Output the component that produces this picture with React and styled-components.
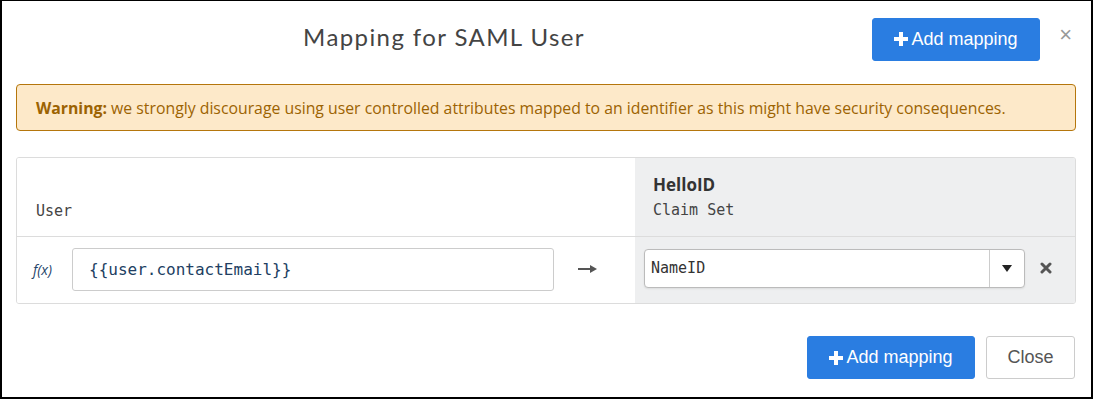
import React from "react";
import styled, { createGlobalStyle } from "styled-components";

const GlobalStyle = createGlobalStyle`
  html, body { margin: 0; padding: 0; background: #fff; }
  * { box-sizing: border-box; }
`;

const Frame = styled.div`
  width: 1093px;
  height: 399px;
  border: 2px solid #000;
  border-top-width: 1px;
  padding: 16px 15px 0 14px;
  background: #fff;
  display: flex;
  flex-direction: column;
`;

const Header = styled.div`
  display: flex;
  align-items: center;
  height: 44px;
`;

const Title = styled.h4`
  flex: 1;
  margin: -5px 0 0 0;
  text-align: center;
  font-family: "Lato", "Open Sans", sans-serif;
  font-weight: 400;
  font-size: 24px;
  letter-spacing: 1.4px;
  color: #444;
`;

const PrimaryButton = styled.button`
  display: inline-flex;
  align-items: center;
  justify-content: center;
  gap: 3px;
  width: 168px;
  height: 43px;
  border: 1px solid #2a7de1;
  border-radius: 3px;
  background: #2a7de1;
  color: #fff;
  font-family: "Liberation Sans", Arial, sans-serif;
  font-size: 18px;
  padding: 0;
  cursor: pointer;
`;

const DefaultButton = styled.button`
  width: 89px;
  height: 43px;
  border: 1px solid #ccc;
  border-radius: 3px;
  background: #fff;
  color: #555;
  font-family: "Liberation Sans", Arial, sans-serif;
  font-size: 18px;
  padding: 0;
`;

const CloseX = styled.span`
  width: 36px;
  text-align: right;
  padding-right: 4px;
  font-family: "Liberation Sans", Arial, sans-serif;
  font-size: 22px;
  color: #999;
  line-height: 1;
  margin-top: -9px;
`;

const Warning = styled.div`
  margin-top: 23px;
  height: 47px;
  display: flex;
  align-items: center;
  padding: 0 19px;
  background: #fde9c9;
  border: 1px solid #b5760c;
  border-radius: 4px;
  color: #9c6302;
  font-family: "Open Sans", sans-serif;
  font-size: 15.8px;
  b { font-weight: 700; }
`;

const Table = styled.div`
  margin-top: 26px;
  display: grid;
  grid-template-columns: 618px 1fr;
  grid-template-rows: 79px 66px;
  border: 1px solid #dcdcdc;
  border-radius: 3px;
  overflow: hidden;
`;

const Cell = styled.div`
  display: flex;
  align-items: ${(p) => (p.$head ? "flex-start" : "center")};
  flex-direction: ${(p) => (p.$head ? "column" : "row")};
  justify-content: ${(p) => (p.$head ? "flex-end" : "flex-start")};
  background: ${(p) => (p.$gray ? "#eeeff0" : "#fff")};
  border-bottom: ${(p) => (p.$head ? "1px solid #dcdcdc" : "none")};
`;

const HeadLeft = styled(Cell)`
  padding: 0 0 16px 19px;
`;

const HeadRight = styled(Cell)`
  padding: 0 0 17px 18px;
`;

const Mono = styled.span`
  font-family: "DejaVu Sans Mono", "Liberation Mono", monospace;
  font-size: 15px;
  color: #444;
`;

const SystemName = styled.span`
  font-family: "Open Sans", sans-serif;
  font-weight: 700;
  font-size: 17px;
  color: #333;
  margin-bottom: 5px;
`;

const BodyLeft = styled(Cell)`
  padding: 0 0 2px 16px;
`;

const BodyRight = styled(Cell)`
  padding: 0 0 4px 9px;
`;

const Fx = styled.span`
  width: 39px;
  font-family: "Open Sans", sans-serif;
  font-style: italic;
  font-size: 14px;
  color: #25446a;
`;

const ExprInput = styled.div`
  width: 482px;
  height: 43px;
  display: flex;
  align-items: center;
  padding-left: 16px;
  border: 1px solid #ccc;
  border-radius: 3px;
  background: #fff;
  font-family: "DejaVu Sans Mono", "Liberation Mono", monospace;
  font-size: 16px;
  color: #213e62;
`;

const ArrowWrap = styled.span`
  display: flex;
  width: 66px;
  justify-content: center;
  color: #555;
`;

const Select = styled.div`
  width: 381px;
  height: 39px;
  display: flex;
  border: 1px solid #bbb;
  border-radius: 4px;
  background: #fff;
  box-shadow: 0 1px 2px rgba(0, 0, 0, 0.08);
`;

const SelectValue = styled.span`
  flex: 1;
  display: flex;
  align-items: center;
  padding-left: 6px;
  font-family: "DejaVu Sans Mono", "Liberation Mono", monospace;
  font-size: 15px;
  color: #333;
`;

const SelectToggle = styled.span`
  width: 35px;
  border-left: 1px solid #ccc;
  display: flex;
  align-items: center;
  justify-content: center;
`;

const RemoveWrap = styled.span`
  display: flex;
  width: 42px;
  justify-content: center;
  color: #555;
`;

const Footer = styled.div`
  margin-top: 32px;
  display: flex;
  justify-content: flex-end;
  gap: 11px;
  padding-right: 1px;
`;

const PlusIcon = () => (
  <svg width="14" height="14" viewBox="0 0 14 14">
    <path d="M5 0h4v5h5v4H9v5H5V9H0V5h5z" fill="#fff" />
  </svg>
);

const LongArrow = () => (
  <svg width="19" height="8" viewBox="0 0 19 8">
    <rect x="0" y="3" width="13" height="2" fill="#555" />
    <path d="M12 0 L19 4 L12 8 Z" fill="#555" />
  </svg>
);

const Caret = () => (
  <svg width="10" height="7" viewBox="0 0 10 7">
    <path d="M0 0 H10 L5 7 Z" fill="#222" />
  </svg>
);

const TimesIcon = () => (
  <svg width="12" height="12" viewBox="0 0 12 12">
    <path d="M2 2 L10 10 M10 2 L2 10" stroke="#555" strokeWidth="3" strokeLinecap="round" />
  </svg>
);

export default function App() {
  return (
    <>
      <GlobalStyle />
      <Frame>
        <Header>
          <Title>Mapping for SAML User</Title>
          <PrimaryButton>
            <PlusIcon />
            Add mapping
          </PrimaryButton>
          <CloseX>×</CloseX>
        </Header>
        <Warning>
          <span>
            <b>Warning:</b> we strongly discourage using user controlled attributes mapped to an identifier as this might have security consequences.
          </span>
        </Warning>
        <Table>
          <HeadLeft $head>
            <Mono>User</Mono>
          </HeadLeft>
          <HeadRight $head $gray>
            <SystemName>HelloID</SystemName>
            <Mono>Claim Set</Mono>
          </HeadRight>
          <BodyLeft>
            <Fx>f(x)</Fx>
            <ExprInput>{"{{user.contactEmail}}"}</ExprInput>
            <ArrowWrap>
              <LongArrow />
            </ArrowWrap>
          </BodyLeft>
          <BodyRight $gray>
            <Select>
              <SelectValue>NameID</SelectValue>
              <SelectToggle>
                <Caret />
              </SelectToggle>
            </Select>
            <RemoveWrap>
              <TimesIcon />
            </RemoveWrap>
          </BodyRight>
        </Table>
        <Footer>
          <PrimaryButton>
            <PlusIcon />
            Add mapping
          </PrimaryButton>
          <DefaultButton>Close</DefaultButton>
        </Footer>
      </Frame>
    </>
  );
}
